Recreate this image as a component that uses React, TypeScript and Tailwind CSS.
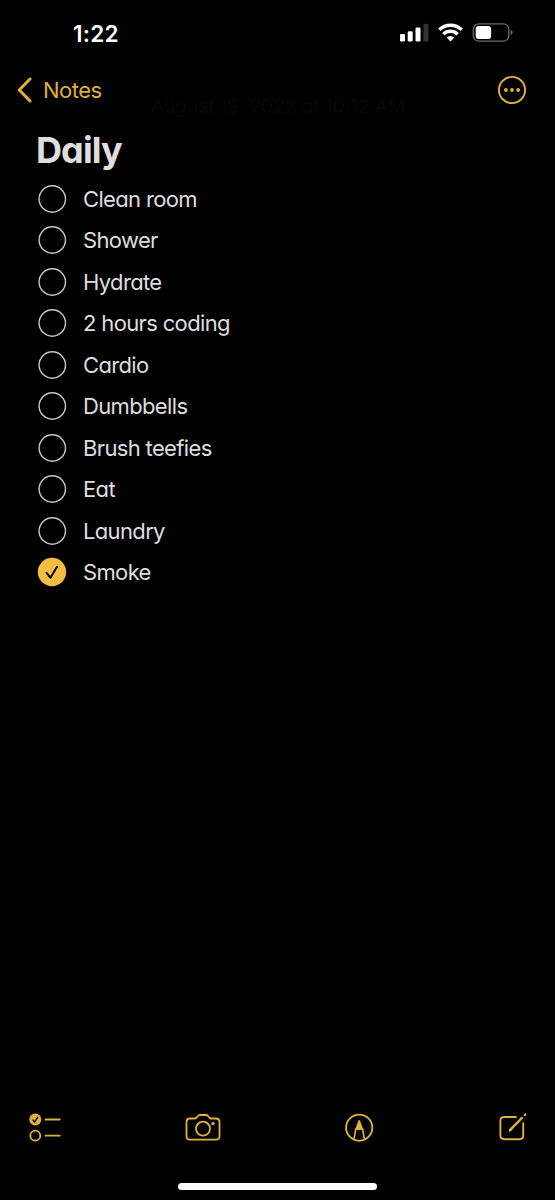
const items = [
  { label: 'Clean room', done: false },
  { label: 'Shower', done: false },
  { label: 'Hydrate', done: false },
  { label: '2 hours coding', done: false },
  { label: 'Cardio', done: false },
  { label: 'Dumbbells', done: false },
  { label: 'Brush teefies', done: false },
  { label: 'Eat', done: false },
  { label: 'Laundry', done: false },
  { label: 'Smoke', done: true },
];

function StatusBar() {
  return (
    <div className="flex h-[66px] items-center justify-between pl-[73px] pr-[42px] text-white">
      <span className="pt-[2px] text-[22.5px] font-semibold leading-7 tracking-[0.3px]">1:22</span>
      <svg width="113" height="20" viewBox="0 0 113 20" fill="currentColor">
        {/* signal */}
        <rect x="0" y="11" width="5" height="7.5" rx="1.3" />
        <rect x="7.7" y="8.3" width="5" height="10.2" rx="1.3" />
        <rect x="15.5" y="4.5" width="5" height="14" rx="1.3" />
        <rect x="23.4" y="0.7" width="5" height="17.8" rx="1.3" fill="#333" />
        {/* wifi */}
        <g fill="none" stroke="currentColor" strokeWidth="3.5">
          <path d="M39.3 6.8a15.8 15.8 0 0 1 22.4 0" />
          <path d="M43.4 11.2a10 10 0 0 1 14.2 0" />
        </g>
        <path d="M46.7 14.6a5.2 5.2 0 0 1 7.6 0L50.5 18.6z" />
        {/* battery */}
        <rect x="73.4" y="0.8" width="35.4" height="17.4" rx="5.5" fill="none" stroke="#6b6b6b" strokeWidth="1.3" />
        <rect x="75.7" y="3" width="15.4" height="13" rx="3" />
        <path d="M110.6 6.8c2.6 1 2.6 4.6 0 5.6z" fill="#6b6b6b" />
      </svg>
    </div>
  );
}

function NavBar() {
  return (
    <div className="relative flex h-[48px] items-center justify-between pl-[17px] pr-[28px] text-[#dfb03b]">
      <button className="flex items-center gap-[11px]">
        <svg width="15" height="26" viewBox="0 0 15 26" fill="none" stroke="currentColor" strokeWidth="3" strokeLinecap="round" strokeLinejoin="round">
          <path d="M13 2 2.2 13 13 24" />
        </svg>
        <span className="text-[22px] leading-7 tracking-[-0.5px]">Notes</span>
      </button>
      <button aria-label="More">
        <svg width="30" height="30" viewBox="0 0 30 30" fill="currentColor">
          <circle cx="15" cy="15" r="13.1" fill="none" stroke="currentColor" strokeWidth="1.9" />
          <circle cx="8.9" cy="15" r="1.9" />
          <circle cx="15" cy="15" r="1.9" />
          <circle cx="21.1" cy="15" r="1.9" />
        </svg>
      </button>
      {/* date scrolled under the bar, almost faded out */}
      <span className="absolute left-[151px] top-[29px] whitespace-nowrap text-[19px] leading-6 text-[#070707]">
        August 18, 2022 at 10:12 AM
      </span>
    </div>
  );
}

function Check({ done }: { done: boolean }) {
  return (
    <svg width="30" height="30" viewBox="0 0 30 30" fill="none">
      {done ? (
        <>
          <circle cx="15" cy="15" r="14.2" fill="#f3bc42" />
          <path d="m9.4 15.7 4 5 6.7-10.9" stroke="#000" strokeWidth="2" strokeLinecap="round" strokeLinejoin="round" />
        </>
      ) : (
        <circle cx="15.3" cy="15" r="13.2" stroke="#c8c8c8" strokeWidth="1.4" />
      )}
    </svg>
  );
}

function Toolbar() {
  return (
    <div className="flex h-[40px] items-center justify-between pl-[28px] pr-[27px] text-[#e0b23c]">
      <button aria-label="Checklist">
        <svg width="34" height="30" viewBox="0 0 34 30" fill="none" stroke="currentColor" strokeWidth="1.8" strokeLinecap="round">
          <circle cx="7.3" cy="6.5" r="6" fill="currentColor" stroke="none" />
          <path d="m4.9 6.9 1.7 2.2 3-4.7" stroke="#000" strokeWidth="1.3" />
          <circle cx="7.3" cy="22.7" r="5" />
          <path d="M17.5 6.5h14.2M17.5 22.7h14.2" />
        </svg>
      </button>
      <button aria-label="Camera">
        <svg width="36" height="30" viewBox="0 0 36 30" fill="none" stroke="currentColor" strokeWidth="1.8" strokeLinejoin="round">
          <path d="M5 5.5h4.5c1 0 1.5-.3 2.2-1l1.3-1.5c.6-.7 1.2-1 2.2-1h5.6c1 0 1.6.3 2.2 1l1.3 1.5c.7.7 1.2 1 2.2 1H31c2.2 0 3.5 1.2 3.5 3.4v14.3c0 2.2-1.3 3.4-3.5 3.4H5c-2.2 0-3.5-1.2-3.5-3.4V8.900c0-2.2 1.3-3.4 3.5-3.4Z" />
          <circle cx="18" cy="15.7" r="7" />
          <circle cx="28" cy="10.6" r="1.7" fill="currentColor" stroke="none" />
        </svg>
      </button>
      <button aria-label="Markup">
        <svg width="30" height="30" viewBox="0 0 30 30" fill="none" stroke="currentColor" strokeWidth="1.8">
          <circle cx="14.2" cy="14.7" r="13.1" />
          <path d="M8.9 26.7 10.8 16h6.8L19.5 26.7" strokeWidth="1.6" />
          <path d="m10.1 16.7 3.1-8.8q1-2 2 0l3.1 8.800z" fill="currentColor" stroke="none" />
        </svg>
      </button>
      <button aria-label="New note">
        <svg width="30" height="30" viewBox="0 0 30 30" fill="none" stroke="currentColor" strokeWidth="1.9" strokeLinecap="round">
          <path d="M18 4H6.2C3.7 4 2.4 5.3 2.4 7.7v14.9c0 2.4 1.3 3.7 3.8 3.7h15.3c2.4 0 3.7-1.3 3.7-3.7V10.2" />
          <path d="M12 17.2 23.800 5" strokeWidth="2.5" />
          <path d="m12.5 15.7-1.4 2.9 2.6-1.5z" fill="currentColor" strokeWidth=".6" />
          <path d="m26.7 2 .5-.5" strokeWidth="2.3" />
        </svg>
      </button>
    </div>
  );
}

export default function App() {
  return (
    <div className="flex h-[1200px] w-[555px] flex-col overflow-hidden bg-black font-['Inter',sans-serif] [font-feature-settings:'cv11']">
      <StatusBar />
      <NavBar />
      <main className="flex-1 px-[37px] pt-[14px] text-[#dedede]">
        <h1 className="-ml-px text-[36px] font-bold leading-[44px] tracking-[-0.9px]">Daily</h1>
        <ul className="mt-[6px]">
          {items.map((item) => (
            <li key={item.label} className="flex h-[41.5px] items-center gap-[16px] text-[22px] tracking-[-0.65px]">
              <Check done={item.done} />
              <span className="pt-px">{item.label}</span>
            </li>
          ))}
        </ul>
      </main>
      <Toolbar />
      <div className="flex h-[52px] justify-center pt-[35px]">
        <div className="h-[7px] w-[199px] rounded-full bg-white" />
      </div>
    </div>
  );
}
